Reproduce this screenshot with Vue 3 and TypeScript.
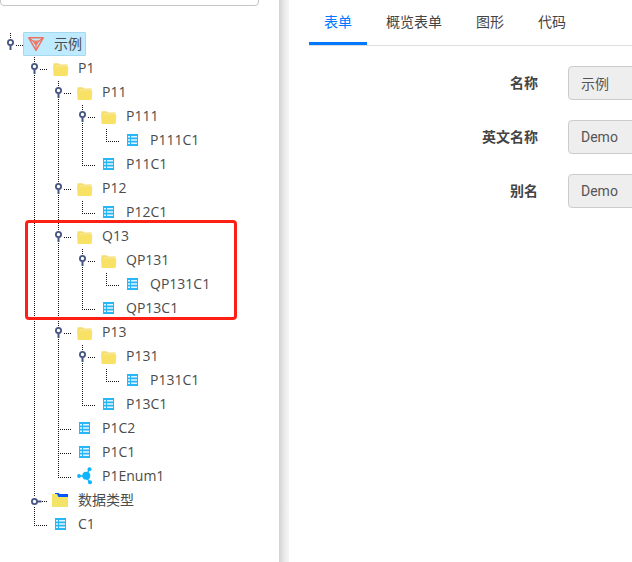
<script setup lang="ts">
import { computed, ref } from 'vue'

type Kind = 'root' | 'folder' | 'closed' | 'list' | 'enum'

interface TreeNode {
  label: string
  kind: Kind
  open?: boolean
  children?: TreeNode[]
}

interface Row {
  node: TreeNode
  guides: boolean[]
  last: boolean
}

const leaf = (label: string, kind: Kind = 'list'): TreeNode => ({ label, kind })
const folder = (label: string, children: TreeNode[]): TreeNode => ({
  label,
  kind: 'folder',
  open: true,
  children,
})

const root = ref<TreeNode>({
  label: '示例',
  kind: 'root',
  open: true,
  children: [
    folder('P1', [
      folder('P11', [folder('P111', [leaf('P111C1')]), leaf('P11C1')]),
      folder('P12', [leaf('P12C1')]),
      folder('Q13', [folder('QP131', [leaf('QP131C1')]), leaf('QP13C1')]),
      folder('P13', [folder('P131', [leaf('P131C1')]), leaf('P13C1')]),
      leaf('P1C2'),
      leaf('P1C1'),
      leaf('P1Enum1', 'enum'),
    ]),
    { label: '数据类型', kind: 'closed', open: false, children: [] },
    leaf('C1'),
  ],
})

function flatten(node: TreeNode, guides: boolean[], last: boolean): Row[] {
  const rows: Row[] = [{ node, guides, last }]
  if (node.open && node.children) {
    const kids = node.children
    kids.forEach((kid, i) => {
      rows.push(...flatten(kid, [...guides, !last], i === kids.length - 1))
    })
  }
  return rows
}

const rows = computed(() => flatten(root.value, [], true))
const selected = ref('示例')

const tabs = ['表单', '概览表单', '图形', '代码']
const activeTab = ref('表单')

const fields = [
  { id: 'name', label: '名称', value: '示例' },
  { id: 'name-en', label: '英文名称', value: 'Demo' },
  { id: 'alias', label: '别名', value: 'Demo' },
]
</script>

<template>
  <div class="page">
    <aside class="sidebar">
      <input class="search" type="text" aria-label="search" />
      <div class="tree-wrap">
        <ul class="tree">
          <li v-for="row in rows" :key="row.node.label" class="row">
            <span v-for="(line, i) in row.guides" :key="i" class="guide" :class="{ line }"></span>
            <span class="guide joint" :class="{ through: !row.last }">
              <button
                v-if="row.node.children"
                class="switch"
                :aria-expanded="row.node.open"
                :aria-label="row.node.label"
                @click="row.node.open = !row.node.open"
              >
                <svg v-if="row.node.open" width="9" height="13" viewBox="0 0 9 13">
                  <rect width="9" height="13" fill="#fff" />
                  <path d="M4.5 7v5" stroke="#465682" stroke-width="2" />
                  <circle cx="4.5" cy="4.5" r="2.6" fill="#fff" stroke="#465682" stroke-width="1.8" />
                </svg>
                <svg v-else width="12" height="9" viewBox="0 0 12 9">
                  <rect width="12" height="9" fill="#fff" />
                  <path d="M7 4.5h4.500" stroke="#465682" stroke-width="2" />
                  <circle cx="4.5" cy="4.5" r="2.6" fill="#fff" stroke="#465682" stroke-width="1.8" />
                </svg>
              </button>
            </span>
            <button
              class="node"
              :class="{ selected: selected === row.node.label }"
              @click="selected = row.node.label"
            >
              <svg class="icon" width="24" height="24" viewBox="0 0 24 24" aria-hidden="true">
                <g v-if="row.node.kind === 'root'" fill="none" stroke="#f0705c" stroke-linejoin="round">
                  <path d="M4.800 5.800H19.200L12 18.400Z" stroke-width="1.400" />
                  <path d="M5 6l4 3h6l4-3M9 9l3 4 3-4M12 12v6" stroke-width="1.200" />
                  <path d="M10 9.500h4L12 13z" fill="#f0705c" stroke="none" />
                </g>
                <g v-else-if="row.node.kind === 'folder'">
                  <path d="M5.500 8.300q0-1 1-1h4l1.500 1.200h6.500q1 0 1 1V12h-14z" fill="#f5db6b" />
                  <path d="M7 9.700h12v.8H7z" fill="#fdf3bb" />
                  <path d="M5 10.800h15.300l-.5 8.200q-.1 1-1 1H6.500q-1 0-1-1z" fill="#f7e266" />
                </g>
                <g v-else-if="row.node.kind === 'closed'">
                  <path d="M7 5h3.500l1 1H20v4H7z" fill="#0055ff" />
                  <path d="M4 6h5l1.500 3H20v10H4z" fill="#f3e367" />
                </g>
                <g v-else-if="row.node.kind === 'list'">
                  <path d="M7 6h11v12H7z" fill="#29b6f6" />
                  <path
                    d="M8 8h2v1.500H8zM11 8h6v1.500h-6zM8 11.200h2v1.600H8zM11 11.200h6v1.600h-6zM8 14.500h2V16H8zM11 14.500h6V16h-6z"
                    fill="#e1f5fe"
                  />
                </g>
                <g v-else fill="#0db4ff">
                  <path d="M7 12h7M14 12l3.200-6.500M14 12l3.500 6.500" stroke="#0db4ff" stroke-width="1.400" />
                  <circle cx="14.300" cy="11.800" r="4" />
                  <circle cx="7" cy="12" r="1.900" />
                  <circle cx="17.500" cy="5.200" r="2" />
                  <circle cx="18" cy="18.200" r="2" />
                </g>
              </svg>
              <span>{{ row.node.label }}</span>
            </button>
          </li>
        </ul>
        <div class="mark"></div>
      </div>
    </aside>
    <div class="splitter"></div>
    <main class="main">
      <nav class="tabs" role="tablist">
        <button
          v-for="tab in tabs"
          :key="tab"
          class="tab"
          :class="{ active: tab === activeTab }"
          role="tab"
          :aria-selected="tab === activeTab"
          @click="activeTab = tab"
        >
          {{ tab }}
        </button>
      </nav>
      <form class="form" @submit.prevent>
        <template v-for="field in fields" :key="field.id">
          <label class="label" :for="field.id">{{ field.label }}</label>
          <input :id="field.id" class="field" type="text" :value="field.value" readonly />
        </template>
      </form>
    </main>
  </div>
</template>

<style>
body {
  background: #fff;
  overflow: hidden;
}
</style>

<style scoped>
* {
  box-sizing: border-box;
}
.page {
  display: flex;
  min-height: 100vh;
  overflow: hidden;
  font-family: Roboto, "Noto Sans CJK SC", sans-serif;
  font-size: 14px;
  color: #444;
}
button {
  padding: 0;
  border: 0;
  background: none;
  font: inherit;
  color: inherit;
  cursor: pointer;
}
.sidebar {
  flex: 0 0 279px;
}
.search {
  display: block;
  width: 259px;
  height: 34px;
  margin-top: -28px;
  border: 1px solid #c4c4c4;
  border-radius: 4px;
  background: #fff;
}
.tree-wrap {
  position: relative;
  margin-top: 26px;
}
.tree {
  margin: 0;
  padding: 0;
  list-style: none;
  font-family: "Open Sans", "Noto Sans CJK SC", sans-serif;
  color: #4c4c4c;
}
.row {
  display: flex;
  height: 24px;
}
.guide {
  position: relative;
  flex: 0 0 24px;
}
.guide.line::before,
.joint::before,
.joint.through::after {
  content: "";
  position: absolute;
  left: 10px;
  top: 1px;
  width: 1px;
  height: 24px;
  background: repeating-linear-gradient(#111 0 1px, transparent 1px 2px);
}
.joint::before {
  width: 13px;
  height: 13px;
  background:
    repeating-linear-gradient(#111 0 1px, transparent 1px 2px) left top / 1px 100% no-repeat,
    repeating-linear-gradient(to right, #111 0 1px, transparent 1px 2px) left bottom / 100% 1px no-repeat;
}
.joint.through::after {
  top: 13px;
  height: 12px;
}
.switch {
  position: absolute;
  left: 6px;
  top: 6px;
  z-index: 1;
  line-height: 0;
}
.switch[aria-expanded="false"] {
  top: 9px;
}
.node {
  display: flex;
  align-items: center;
  gap: 6px;
  height: 24px;
  margin-left: -1px;
  padding-right: 3px;
  border: 1px solid transparent;
  border-radius: 1px;
  line-height: 22px;
  white-space: nowrap;
}
.node.selected {
  border-color: #a6d9ee;
  background: #beebff;
}
.icon {
  flex: none;
}
.mark {
  position: absolute;
  left: 25px;
  top: 188px;
  width: 212px;
  height: 100px;
  border: 3px solid #ff2015;
  border-radius: 4px;
  pointer-events: none;
}
.splitter {
  flex: 0 0 10px;
  background: linear-gradient(to right, #d2d2d2, #f0f0f0 70%, #f4f4f4);
}
.main {
  flex: 1;
  min-width: 0;
  padding-left: 20px;
  overflow: hidden;
}
.tabs {
  display: flex;
  gap: 4px;
  height: 46px;
  border-bottom: 1px solid #ddd;
}
.tab {
  padding: 2px 15px 0;
  border-bottom: 3px solid transparent;
  line-height: 40px;
  white-space: nowrap;
}
.tab.active {
  border-color: #0078ff;
  color: #0078ff;
}
.form {
  display: grid;
  grid-template-columns: 229px minmax(200px, 1fr);
  column-gap: 30px;
  row-gap: 20px;
  padding-top: 20px;
}
.label {
  text-align: right;
  font-weight: 700;
  line-height: 34px;
}
.field {
  min-width: 0;
  height: 34px;
  padding: 0 12px;
  border: 1px solid #ccc;
  border-radius: 4px;
  background: #eee;
  font: inherit;
  color: #555;
}
</style>
